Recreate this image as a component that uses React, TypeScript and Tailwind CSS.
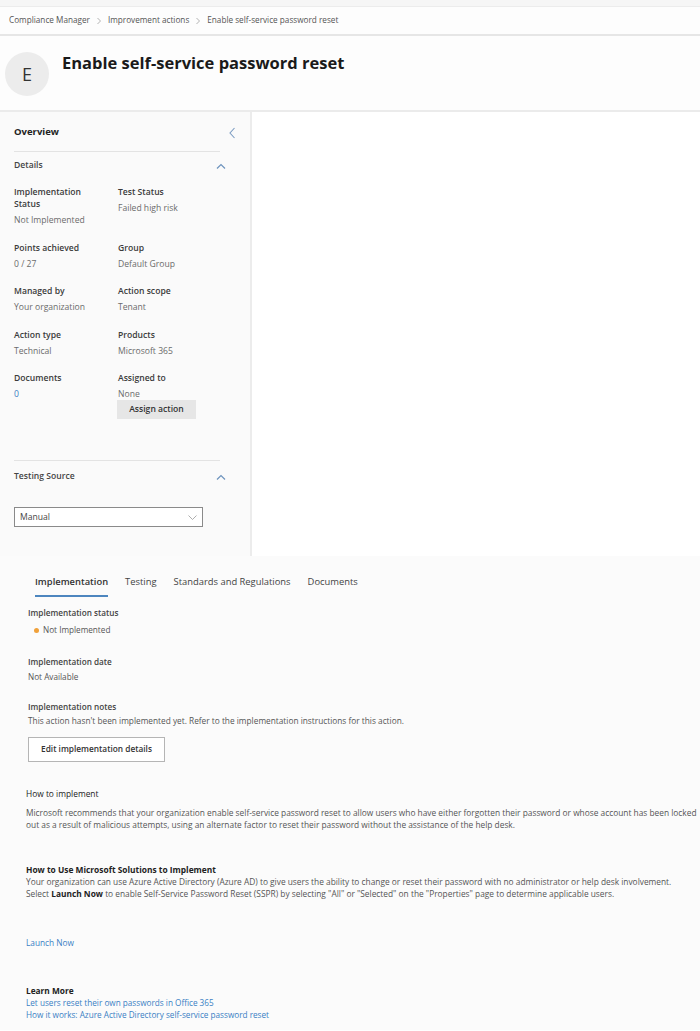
import React from "react";

const font = { fontFamily: '"Open Sans", "Noto Sans", "Liberation Sans", sans-serif' };

function ChevronUp() {
  return (
    <svg width="10" height="6" viewBox="0 0 10 6" fill="none">
      <polyline points="1,5.5 5,1.5 9,5.5" stroke="#6d93bd" strokeWidth="1.2" />
    </svg>
  );
}
function ChevronLeft() {
  return (
    <svg width="6" height="12" viewBox="0 0 6 12" fill="none">
      <polyline points="5.5,1 1,6 5.5,11" stroke="#7c9cc2" strokeWidth="1.1" />
    </svg>
  );
}
function ChevronDown() {
  return (
    <svg width="9" height="5" viewBox="0 0 9 5" fill="none">
      <polyline points="0.5,0.5 4.5,4.5 8.5,0.5" stroke="#999" strokeWidth="0.8" />
    </svg>
  );
}
function Sep() {
  return (
    <svg width="6" height="8" viewBox="0 0 6 8" fill="none" className="mx-[6px]">
      <polyline points="1.5,1 4.5,4 1.5,7" stroke="#aaa" strokeWidth="0.9" />
    </svg>
  );
}

function Field({ label, children }: { label: React.ReactNode; children?: React.ReactNode }) {
  return (
    <div className="flex flex-col">
      <div className="text-[8.6px] leading-[12px] font-semibold text-[#3b3b3b]">{label}</div>
      <div className="mt-[4px] text-[8.6px] leading-[12px] text-[#6b6b6b]">{children}</div>
    </div>
  );
}

export default function App() {
  return (
    <div className="w-[700px] h-[1031px] overflow-hidden bg-white text-[#333]" style={font}>
      {/* top strip */}
      <div className="h-[7px] bg-[#f6f6f6] border-b border-[#ececec]" />
      {/* breadcrumb */}
      <div className="h-[29px] bg-[#fdfdfd] border-b-2 border-[#e6e6e6] flex items-center pl-[9px] text-[8.2px] text-[#555]">
        <span>Compliance Manager</span>
        <Sep />
        <span>Improvement actions</span>
        <Sep />
        <span>Enable self-service password reset</span>
      </div>
      {/* header */}
      <div className="h-[76px] bg-[#fdfdfd] border-b-2 border-[#ebebeb] flex items-start">
        <div className="ml-[5px] mt-[16px] w-[44px] h-[44px] rounded-full bg-[#ececec] flex items-center justify-center text-[18px] text-[#333]">
          E
        </div>
        <div className="ml-[13px] mt-[16px] text-[16.5px] leading-[22px] font-bold text-[#1a1a1a]">
          Enable self-service password reset
        </div>
      </div>
      {/* body */}
      <div className="flex h-[444px]">
        <div className="w-[252px] border-r-2 border-[#ececec] bg-[#fafafa] flex flex-col">
          <div className="h-[39px] flex items-center justify-between pl-[14px] pr-[15px] pt-[2px]">
            <span className="text-[9.5px] font-bold text-[#222]">Overview</span>
            <ChevronLeft />
          </div>
          <div className="ml-[14px] w-[206px] border-t border-[#e3e3e3]" />
          <div className="h-[27px] flex items-center justify-between pl-[14px] w-[226px]">
            <span className="text-[8.6px] font-semibold text-[#444]">Details</span>
            <ChevronUp />
          </div>
          <div className="mt-[7px] ml-[14px] grid grid-cols-[104px_120px] gap-y-[15.5px]">
            <Field label={<>Implementation<br />Status</>}>Not Implemented</Field>
            <Field label="Test Status">Failed high risk</Field>
            <Field label="Points achieved">0 / 27</Field>
            <Field label="Group">Default Group</Field>
            <Field label="Managed by">Your organization</Field>
            <Field label="Action scope">Tenant</Field>
            <Field label="Action type">Technical</Field>
            <Field label="Products">Microsoft 365</Field>
            <Field label="Documents">
              <span className="text-[#3a7fc4]">0</span>
            </Field>
            <div className="flex flex-col">
              <div className="text-[8.6px] leading-[12px] font-semibold text-[#3b3b3b]">Assigned to</div>
              <div className="mt-[4px] text-[8.6px] leading-[12px] text-[#6b6b6b]">None</div>
              <div className="-ml-[1px] w-[79px] h-[19px] bg-[#e6e6e6] flex items-center justify-center text-[8.6px] font-semibold text-[#333]">
                Assign action
              </div>
            </div>
          </div>
          <div className="mt-[41px] ml-[14px] w-[206px] border-t border-[#e3e3e3]" />
          <div className="h-[31px] flex items-center justify-between pl-[14px] w-[226px]">
            <span className="text-[8.6px] font-semibold text-[#444]">Testing Source</span>
            <ChevronUp />
          </div>
          <div className="mt-[15px] ml-[14px] w-[189px] h-[20px] border border-[#8a8a8a] bg-white flex items-center justify-between pl-[5px] pr-[5px]">
            <span className="text-[8.6px] text-[#444]">Manual</span>
            <ChevronDown />
          </div>
        </div>
        <div className="flex-1 bg-white" />
      </div>
      {/* bottom section */}
      <div className="bg-[#fbfbfb] h-[474px] pt-[19px]">
        <div className="flex items-start pl-[35px] gap-[17px] text-[9.4px] text-[#444]">
          <div className="flex flex-col items-stretch">
            <span className="leading-[14px] font-semibold text-[#333]">Implementation</span>
            <div className="mt-[6px] h-[2px] bg-[#4d86bf]" />
          </div>
          <span className="leading-[14px]">Testing</span>
          <span className="leading-[14px]">Standards and Regulations</span>
          <span className="leading-[14px]">Documents</span>
        </div>
        <div className="pl-[28px] mt-[10px]">
          <div className="text-[8.2px] leading-[12px] font-semibold text-[#444]">Implementation status</div>
          <div className="mt-[5px] flex items-center text-[8.2px] leading-[12px] text-[#555]">
            <span className="ml-[6px] w-[5px] h-[5px] rounded-full bg-[#f0a13a]" />
            <span className="ml-[4px]">Not Implemented</span>
          </div>
          <div className="mt-[20px] text-[8.2px] leading-[12px] font-semibold text-[#444]">Implementation date</div>
          <div className="mt-[3px] text-[8.2px] leading-[12px] text-[#555]">Not Available</div>
          <div className="mt-[18px] text-[8.2px] leading-[12px] font-semibold text-[#444]">Implementation notes</div>
          <div className="mt-[2px] text-[8.3px] leading-[12px] text-[#555]">
            This action hasn&apos;t been implemented yet. Refer to the implementation instructions for this action.
          </div>
          <div className="mt-[10px] w-[137px] h-[25px] border border-[#b5b5b5] bg-white flex items-center justify-center text-[8.3px] font-semibold text-[#333]">
            Edit implementation details
          </div>
        </div>
        <div className="pl-[26px] w-[700px]">
          <div className="mt-[26px] text-[8.4px] leading-[12px] text-[#222]">How to implement</div>
          <div className="mt-[7px] text-[8.35px] leading-[12px] text-[#555]">
            Microsoft recommends that your organization enable self-service password reset to allow users who have either forgotten their password or whose account has been locked out as a result of malicious attempts, using an alternate factor to reset their password without the assistance of the help desk.
          </div>
          <div className="mt-[33px] text-[8.4px] leading-[12px] font-bold text-[#222]">How to Use Microsoft Solutions to Implement</div>
          <div className="text-[8.35px] leading-[12px] text-[#555]">
            Your organization can use Azure Active Directory (Azure AD) to give users the ability to change or reset their password with no administrator or help desk involvement.
            <br />
            Select <span className="font-bold text-[#222]">Launch Now</span> to enable Self-Service Password Reset (SSPR) by selecting &quot;All&quot; or &quot;Selected&quot; on the &quot;Properties&quot; page to determine applicable users.
          </div>
          <div className="mt-[37px] text-[8.3px] leading-[12px] text-[#3a7fc4]">Launch Now</div>
          <div className="mt-[36px] text-[8.3px] leading-[12px] font-bold text-[#222]">Learn More</div>
          <div className="text-[8.2px] leading-[12px] text-[#3a7fc4]">Let users reset their own passwords in Office 365</div>
          <div className="text-[8.2px] leading-[12px] text-[#3a7fc4]">How it works: Azure Active Directory self-service password reset</div>
        </div>
      </div>
    </div>
  );
}
